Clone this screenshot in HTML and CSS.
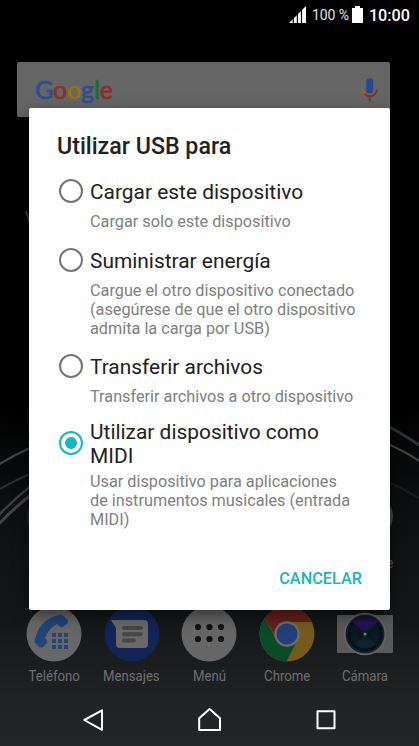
FILE: index.html
```html
<!DOCTYPE html>
<html lang="es">
<head>
    <meta charset="UTF-8">
    <meta name="viewport" content="width=device-width, initial-scale=1.0">
    <title>Utilizar USB para</title>
    <link rel="stylesheet" href="styles.css">
</head>
<body>
    <div class="phone">
        <svg class="wallpaper" viewBox="0 0 419 746" fill="none">
            <path d="M-2 465 Q14 455 32 447" stroke="#3d4546" stroke-width="2"/>
            <path d="M-2 490 Q14 481 32 473" stroke="#2b2f30" stroke-width="2"/>
            <path d="M-2 516 Q14 499 32 485" stroke="#3c3a3a" stroke-width="2.5"/>
            <path d="M-2 525 Q14 508 32 494" stroke="#444242" stroke-width="3"/>
            <path d="M388 426 Q404 435 421 446" stroke="#2c3233" stroke-width="3"/>
            <path d="M388 444 Q404 451 421 462" stroke="#444242" stroke-width="2"/>
            <path d="M388 482 Q404 489 421 499" stroke="#1d1b1b" stroke-width="2"/>
            <circle cx="46" cy="517" r="19" fill="#292929"/>
            <circle cx="373" cy="516" r="20" fill="#484848"/>
        </svg>

        <div class="status-bar">
            <svg class="signal" width="17" height="17" viewBox="0 0 17 17">
                <path d="M0 17 L17 0 V17 Z" fill="#fff"/>
                <path d="M4.2 11V17 M8.4 7V17 M12.5 3V17" stroke="#000" stroke-width="1.2"/>
            </svg>
            <span class="percent">100 %</span>
            <svg class="battery" width="11" height="17" viewBox="0 0 11 17">
                <path d="M3 0H8V2H11V17H0V2H3Z" fill="#fff"/>
            </svg>
            <span class="clock">10:00</span>
        </div>

        <div class="search">
            <div class="google"><span class="b">G</span><span class="r">o</span><span class="y">o</span><span class="b">g</span><span class="g">l</span><span class="r">e</span></div>
            <svg width="18" height="25" viewBox="0 0 18 25" fill="none">
                <rect x="5.2" y="1" width="7" height="15.5" rx="3.5" fill="#25498d"/>
                <path d="M1.5 12.5 Q1.7 15.5 3.8 17.4" stroke="#917010" stroke-width="2.2"/>
                <path d="M3.4 17 Q8.8 21.8 13.8 17.2 Q15.9 15 16 12.5" stroke="#8b2e25" stroke-width="2.2"/>
                <path d="M8.8 20.5V24.5" stroke="#1c6532" stroke-width="2.2"/>
            </svg>
        </div>

        <div class="hidden-label left">V</div>
        <div class="hidden-label right">e</div>

        <div class="dock">
            <div class="app">
                <svg viewBox="0 0 56 56">
                    <circle cx="28" cy="28" r="27.5" fill="#676767"/>
                    <path d="M36 9 L42 14 Q43 16 41 18 L37 21 Q35 22 33 20 L31 18 Q22 23 19 32 L21 34 Q22 36 20 38 L17 41 Q15 42 13 41 L9 37 Q8 35 9 33 Q13 14 33 9 Q35 8 36 9Z" fill="#234478"/>
                    <path d="M26 27h4v4h-4zM32 27h4v4h-4zM38 27h4v4h-4zM26 33h4v4h-4zM32 33h4v4h-4zM38 33h4v4h-4zM26 39h4v4h-4zM32 39h4v4h-4zM38 39h4v4h-4z" fill="#234478"/>
                </svg>
                <span>Teléfono</span>
            </div>
            <div class="app">
                <svg viewBox="0 0 56 56">
                    <circle cx="28" cy="28" r="27.5" fill="#132456"/>
                    <path d="M7 14H40Q44 14 44 18V38Q44 42 40 42H16Q12 42 12 38V22Z" fill="#696969"/>
                    <path d="M20 22H37M20 28.3H37M20 34.5H30" stroke="#464646" stroke-width="4" stroke-linecap="round"/>
                </svg>
                <span>Mensajes</span>
            </div>
            <div class="app">
                <svg viewBox="0 0 56 56">
                    <circle cx="28" cy="28" r="27.5" fill="#666"/>
                    <g fill="#111">
                        <circle cx="17" cy="21" r="3.1"/><circle cx="28.5" cy="21" r="3.1"/><circle cx="40" cy="21" r="3.1"/>
                        <circle cx="17" cy="33" r="3.1"/><circle cx="28.5" cy="33" r="3.1"/><circle cx="40" cy="33" r="3.1"/>
                    </g>
                </svg>
                <span>Menú</span>
            </div>
            <div class="app">
                <svg viewBox="0 0 56 56">
                    <circle cx="28" cy="28" r="27.5" fill="#755b1b"/>
                    <path d="M28 28 L38.5 34 L27.5 55.5 A27.5 27.5 0 0 1 5.8 11.8 L17.5 34Z" fill="#0b4b29"/>
                    <path d="M28 28 L17.5 32 L5.8 11.8 A27.5 27.5 0 0 1 52.8 16 H28Z" fill="#65201b"/>
                    <circle cx="28" cy="28" r="12.7" fill="#6c6c6c"/>
                    <circle cx="28" cy="28" r="10.5" fill="#223f79"/>
                </svg>
                <span>Chrome</span>
            </div>
            <div class="app">
                <svg viewBox="0 0 56 56">
                    <defs>
                        <radialGradient id="lens">
                            <stop offset="0" stop-color="#2b5360"/>
                            <stop offset=".18" stop-color="#09151e"/>
                            <stop offset=".7" stop-color="#0c1a26"/>
                            <stop offset="1" stop-color="#050a12"/>
                        </radialGradient>
                        <linearGradient id="flare" x1="0" y1="0" x2="0" y2="1">
                            <stop offset="0" stop-color="#160e35"/>
                            <stop offset=".4" stop-color="#29135c"/>
                            <stop offset="1" stop-color="#10182c"/>
                        </linearGradient>
                    </defs>
                    <rect x="0" y="9" width="56" height="38" rx="1" fill="#595959"/>
                    <circle cx="28" cy="28" r="21.3" fill="#646464"/>
                    <circle cx="28" cy="28" r="19.5" fill="#102034"/>
                    <circle cx="28" cy="28" r="17.5" fill="url(#lens)"/>
                    <path d="M28 27 L15.5 16 A17 17 0 0 1 40.5 16Z" fill="url(#flare)"/>
                    <path d="M28 30 L17 38 A16 16 0 0 0 39 38Z" fill="#142c3b" opacity=".5"/>
                    <circle cx="28" cy="28" r="1.3" fill="#529078"/>
                </svg>
                <span>Cámara</span>
            </div>
        </div>

        <div class="nav-bar">
            <svg viewBox="0 0 26 26"><path d="M4.3 13 L22 3.3 V22.8 Z"/></svg>
            <svg viewBox="0 0 26 26"><path d="M2.2 23 V11.3 L12.6 1.9 L23 11.3 V23 Z"/></svg>
            <svg viewBox="0 0 26 26"><path d="M4.5 4.2 H21.5 V21.2 H4.5 Z"/></svg>
        </div>

        <div class="dialog">
            <h1>Utilizar USB para</h1>
            <div class="option">
                <div class="head"><i class="radio"></i><h2>Cargar este dispositivo</h2></div>
                <p>Cargar solo este dispositivo</p>
            </div>
            <div class="option">
                <div class="head"><i class="radio"></i><h2>Suministrar energía</h2></div>
                <p>Cargue el otro dispositivo conectado<br>(asegúrese de que el otro dispositivo<br>admita la carga por USB)</p>
            </div>
            <div class="option">
                <div class="head"><i class="radio"></i><h2>Transferir archivos</h2></div>
                <p>Transferir archivos a otro dispositivo</p>
            </div>
            <div class="option">
                <div class="head"><i class="radio checked"></i><h2>Utilizar dispositivo como<br>MIDI</h2></div>
                <p>Usar dispositivo para aplicaciones<br>de instrumentos musicales (entrada<br>MIDI)</p>
            </div>
            <button class="cancel">CANCELAR</button>
        </div>
    </div>
</body>
</html>
```
FILE: styles.css
```css
* {
    box-sizing: border-box;
}
body {
    margin: 0;
    font-family: Roboto, "Liberation Sans", sans-serif;
    background-color: #000;
}
.phone {
    position: relative;
    display: flex;
    flex-direction: column;
    width: 419px;
    height: 746px;
    overflow: hidden;
    background: linear-gradient(#000 0, #000 400px, #0d0f10 510px, #141617 620px, #202223 700px, #232526 746px);
}
.wallpaper {
    position: absolute;
    top: 0;
    left: 0;
    width: 419px;
    height: 746px;
}
.status-bar {
    display: flex;
    align-items: center;
    justify-content: flex-end;
    height: 28px;
    padding-right: 9px;
    color: #fff;
}
.signal {
    margin-right: 6px;
}
.percent {
    margin: 1px 3px 0 0;
    font-size: 14px;
    letter-spacing: -0.1px;
    color: #e0e0e0;
}
.clock {
    margin: 2px 0 0 6px;
    font-size: 16.2px;
    font-weight: 500;
}
.search {
    position: relative;
    display: flex;
    align-items: center;
    justify-content: space-between;
    height: 55px;
    margin: 34px 29px 0 17px;
    padding: 0 11px 0 18px;
    border-radius: 2px;
    background-color: #666;
}
.google {
    margin-top: -2px;
    font-family: Lato, sans-serif;
    font-size: 25px;
    font-weight: 400;
    line-height: 30px;
    letter-spacing: -0.1px;
    -webkit-text-stroke: 0.7px;
}
.b { color: #294f94; }
.r { color: #8e2f27; }
.y { color: #96750e; }
.g { color: #1f6b33; }
.hidden-label {
    position: absolute;
    font-size: 14px;
    line-height: 16px;
    color: #555;
}
.hidden-label.left {
    top: 209px;
    left: 25px;
}
.hidden-label.right {
    top: 555px;
    left: 386px;
}
.dock {
    position: relative;
    display: flex;
    justify-content: space-between;
    margin-top: auto;
    padding: 0 15px;
}
.app {
    display: flex;
    flex-direction: column;
    align-items: center;
    width: 77.8px;
    height: 88px;
}
.app svg {
    width: 56px;
    height: 56px;
}
.app span {
    margin-top: 4px;
    font-size: 15.5px;
    line-height: 20px;
    color: #707070;
    transform: scaleX(0.85);
}
.nav-bar {
    position: relative;
    display: flex;
    justify-content: space-between;
    height: 52px;
    padding: 13px 80px 0;
}
.nav-bar svg {
    width: 26px;
    height: 26px;
    fill: none;
    stroke: #fff;
    stroke-width: 2;
    stroke-linejoin: round;
}
.dialog {
    position: absolute;
    top: 108px;
    left: 29px;
    display: flex;
    flex-direction: column;
    width: 361px;
    height: 502px;
    padding: 24px 28px 17px;
    border-radius: 2px;
    background-color: #fff;
    box-shadow: 0 5px 16px rgba(0, 0, 0, 0.5);
}
.dialog h1 {
    margin: 0 0 16px;
    font-size: 23.2px;
    font-weight: 500;
    line-height: 28px;
    color: #212121;
}
.option {
    margin-bottom: 13.7px;
}
.head {
    display: flex;
    align-items: center;
    min-height: 32px;
}
.head h2 {
    margin: 0;
    font-size: 20.9px;
    font-weight: 400;
    line-height: 24px;
    color: #212121;
    white-space: nowrap;
}
.radio {
    flex: none;
    width: 24px;
    height: 24px;
    margin: -2px 7px 0 2px;
    border: 2.5px solid #757575;
    border-radius: 50%;
}
.radio.checked {
    border-color: #13b9bf;
    background: radial-gradient(circle, #13b9bf 5.5px, #fff 6.3px);
}
.option p {
    margin: 4px 0 0 33px;
    font-size: 16.25px;
    line-height: 19px;
    color: #808080;
    white-space: nowrap;
}
.cancel {
    align-self: flex-end;
    margin-top: auto;
    padding: 0;
    border: 0;
    background: none;
    font-family: inherit;
    font-size: 16.3px;
    font-weight: 500;
    line-height: 28px;
    color: #16b6bd;
}
```
